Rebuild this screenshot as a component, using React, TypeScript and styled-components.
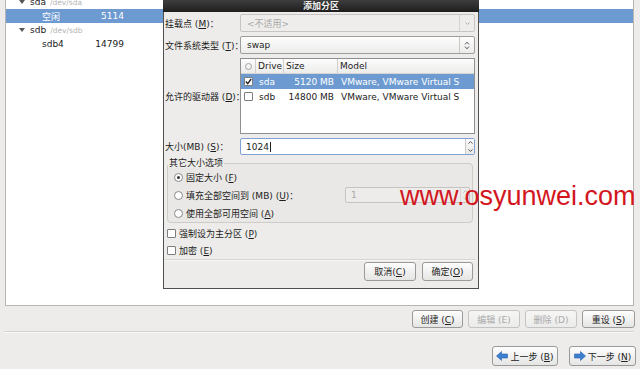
import React from 'react'
import styled, { createGlobalStyle } from 'styled-components'

const GlobalStyle = createGlobalStyle`
  html, body { margin: 0; padding: 0; }
  body {
    background: #edecea;
    font-family: 'DejaVu Sans', 'Noto Sans CJK SC', sans-serif;
    font-size: 9px;
    color: #1c1c1c;
  }
  * { box-sizing: border-box; }
`

const Screen = styled.div`
  position: relative;
  width: 640px;
  height: 369px;
  overflow: hidden;
  display: flex;
  flex-direction: column;
`

/* ---- partition tree behind the dialog ---- */

const TreePanel = styled.div`
  height: 306px;
  margin: 0 6px 0 5px;
  background: #fff;
  border: 1px solid #b6b5b1;
  border-top: none;
  overflow: hidden;
`

const TreeBody = styled.div`
  margin-top: -5px;
`

const TreeRow = styled.div<{ $selected?: boolean; $indent: number }>`
  height: 14px;
  display: flex;
  align-items: center;
  padding-left: ${p => p.$indent}px;
  background: ${p => (p.$selected ? '#6d9bd1' : 'transparent')};
  color: ${p => (p.$selected ? '#fff' : '#222')};
`

const Expander = styled.span`
  width: 0;
  height: 0;
  border-left: 3.5px solid transparent;
  border-right: 3.5px solid transparent;
  border-top: 4px solid #555;
  margin-right: 5px;
`

const DevPath = styled.span`
  color: #b4b4b4;
  font-size: 7.5px;
  margin-left: 4px;
`

const TreeName = styled.span`
  width: 52px;
`

const TreeSize = styled.span`
  width: 30px;
  text-align: right;
`

/* ---- main window buttons ---- */

const ActionBar = styled.div`
  display: flex;
  justify-content: flex-end;
  gap: 5px;
  margin-top: 4px;
  padding-right: 5px;
`

const Button = styled.button<{ $w: number; $h?: number }>`
  width: ${p => p.$w}px;
  height: ${p => p.$h ?? 18}px;
  padding: 0;
  display: flex;
  align-items: center;
  justify-content: center;
  gap: 2px;
  font-family: inherit;
  font-size: 9px;
  color: #222;
  border: 1px solid #9a9a9a;
  border-radius: 3px;
  background: linear-gradient(#fefefe, #e5e5e4);
  &:disabled {
    color: #a9a9a9;
    border-color: #c4c4c4;
    background: linear-gradient(#f6f6f5, #ebebea);
  }
`

const Separator = styled.div`
  margin-top: 3px;
  height: 2px;
  margin-left: 5px;
  margin-right: 6px;
  border-top: 1px solid #d3d2cf;
  border-bottom: 1px solid #f8f8f7;
`

const NavBar = styled.div`
  display: flex;
  justify-content: flex-end;
  gap: 11px;
  margin-top: 13px;
  padding-right: 4px;
`

/* ---- dialog ---- */

const Dialog = styled.div`
  position: absolute;
  left: 163px;
  top: 0;
  width: 316px;
  height: 289px;
  background: #edecea;
  border: 1px solid #4f4f4f;
  border-top: none;
  display: flex;
  flex-direction: column;
`

const TitleBar = styled.div`
  height: 12px;
  margin: 0 -1px;
  background: linear-gradient(#3e3e3e, #1e1e1e);
  color: #f2f2f2;
  font-weight: bold;
  font-size: 9px;
  line-height: 12px;
  text-align: center;
`

const DialogBody = styled.div`
  flex: 1;
  display: flex;
  flex-direction: column;
  padding: 2px 3px 0 1px;
`

const FormGrid = styled.div`
  display: grid;
  grid-template-columns: 75px 1fr;
  grid-template-rows: 18px 18px 76px 17px;
  row-gap: 4px;
  align-items: center;
`

const Label = styled.span`
  white-space: nowrap;
`

const Combo = styled.div<{ $disabled?: boolean }>`
  height: 18px;
  display: flex;
  align-items: center;
  padding-left: 6px;
  border: 1px solid ${p => (p.$disabled ? '#c6c5c3' : '#9f9e9c')};
  border-radius: 2px;
  color: ${p => (p.$disabled ? '#a8a8a8' : '#1c1c1c')};
  background: ${p => (p.$disabled ? '#eeedeb' : 'linear-gradient(#fdfdfd, #ececeb)')};
`

const ComboText = styled.span`
  flex: 1;
`

const ComboArrow = styled.span<{ $disabled?: boolean }>`
  width: 15px;
  height: 100%;
  display: flex;
  align-items: center;
  justify-content: center;
  border-left: 1px solid ${p => (p.$disabled ? '#d4d3d1' : '#c9c8c6')};
`

const DriveList = styled.div`
  height: 76px;
  background: #fff;
  border: 1px solid #8f8f8f;
`

const DriveGrid = styled.div<{ $header?: boolean; $selected?: boolean }>`
  display: grid;
  grid-template-columns: 15px 28px 54px 1fr;
  height: 15px;
  align-items: center;
  background: ${p => (p.$header ? 'linear-gradient(#fcfcfc, #ececeb)' : p.$selected ? '#6d9bd1' : '#fff')};
  color: ${p => (p.$selected ? '#fff' : '#1c1c1c')};
  border-bottom: ${p => (p.$header ? '1px solid #d6d5d3' : 'none')};
`

const HeadCell = styled.span<{ $last?: boolean }>`
  height: 100%;
  display: flex;
  align-items: center;
  padding-left: 2px;
  border-right: ${p => (p.$last ? 'none' : '1px solid #d0cfcd')};
`

const Cell = styled.span<{ $right?: boolean }>`
  padding: ${p => (p.$right ? '0 4px 0 0' : '0 0 0 3px')};
  text-align: ${p => (p.$right ? 'right' : 'left')};
  white-space: nowrap;
  overflow: hidden;
`

const CheckCell = styled.span`
  display: flex;
  justify-content: center;
`

const Box = styled.span`
  width: 9px;
  height: 9px;
  flex: none;
  display: inline-flex;
  align-items: center;
  justify-content: center;
  border: 1px solid #7d7d7d;
  border-radius: 1px;
  background: #fff;
`

const HeadCircle = styled.span`
  width: 7px;
  height: 7px;
  border: 1px solid #a2a2a2;
  border-radius: 50%;
  margin-left: 2px;
`

const SpinField = styled.div<{ $disabled?: boolean; $focus?: boolean }>`
  height: 100%;
  display: flex;
  align-items: center;
  padding-left: 5px;
  border: 1px solid ${p => (p.$focus ? '#7fa2d4' : p.$disabled ? '#c5c4c2' : '#9f9e9c')};
  border-radius: 2px;
  background: ${p => (p.$disabled ? '#edecea' : '#fff')};
  color: ${p => (p.$disabled ? '#a8a8a8' : '#1c1c1c')};
`

const SpinValue = styled.span`
  flex: 1;
  display: flex;
  align-items: center;
`

const Caret = styled.span`
  width: 1px;
  height: 10px;
  background: #222;
  margin-left: 1px;
`

const SpinButtons = styled.span<{ $disabled?: boolean }>`
  width: 9px;
  height: 100%;
  display: flex;
  flex-direction: column;
  border-left: 1px solid ${p => (p.$disabled ? '#d4d3d1' : '#c9c8c6')};
  background: ${p => (p.$disabled ? 'transparent' : 'linear-gradient(#fbfbfb, #e8e8e7)')};
`

const SpinHalf = styled.span`
  flex: 1;
  display: flex;
  align-items: center;
  justify-content: center;
`

const Frame = styled.fieldset`
  margin: 3px 2px 2px 2px;
  padding: 0;
  border: 1px solid #cdccc9;
  border-radius: 4px;
  background: #e9e8e6;
`

const Legend = styled.legend`
  padding: 0 1px;
  margin-left: 0;
  font-size: 9px;
  line-height: 10px;
  background: #edecea;
`

const RadioRow = styled.div`
  height: 18px;
  display: flex;
  align-items: center;
  padding-left: 6px;
  gap: 3px;
`

const Radio = styled.span<{ $on?: boolean }>`
  width: 9px;
  height: 9px;
  flex: none;
  border: 1px solid #888;
  border-radius: 50%;
  background: #fff;
  display: flex;
  align-items: center;
  justify-content: center;
  &::after {
    content: '';
    width: 3px;
    height: 3px;
    border-radius: 50%;
    background: ${p => (p.$on ? '#333' : 'transparent')};
  }
`

const RadioText = styled.span`
  flex: 1;
`

const FillSpin = styled.div`
  width: 125px;
  height: 16px;
  margin-right: 2px;
`

const CheckRow = styled.div`
  height: 17px;
  display: flex;
  align-items: center;
  gap: 3px;
  padding-left: 2px;
`

const DialogSeparator = styled.div`
  height: 2px;
  border-top: 1px solid #d6d5d2;
  border-bottom: 1px solid #f7f7f6;
`

const DialogButtons = styled.div`
  display: flex;
  justify-content: flex-end;
  gap: 6px;
  margin-top: 1px;
  padding-right: 2px;
`

const Watermark = styled.div`
  position: absolute;
  left: 400px;
  top: 183px;
  font-family: 'Liberation Sans', Arial, sans-serif;
  font-size: 27px;
  line-height: 27px;
  color: #d3161e;
  white-space: nowrap;
`

const Check = () => (
  <svg width="7" height="7" viewBox="0 0 7 7">
    <path d="M0.8 3.6 L2.7 5.6 L6.2 1" stroke="#222" strokeWidth="1.4" fill="none" />
  </svg>
)

const Chevron = ({ up, color = '#666' }: { up?: boolean; color?: string }) => (
  <svg width="5" height="3" viewBox="0 0 5 3">
    <path d={up ? 'M0.5 2.6 L2.5 0.6 L4.5 2.6' : 'M0.5 0.4 L2.5 2.4 L4.5 0.4'} stroke={color} strokeWidth="0.9" fill="none" />
  </svg>
)

const UpDown = () => (
  <svg width="6" height="9" viewBox="0 0 6 9">
    <path d="M1 3.4 L3 1.2 L5 3.4 M1 5.6 L3 7.8 L5 5.6" stroke="#444" strokeWidth="0.9" fill="none" />
  </svg>
)

const Arrow = ({ left }: { left?: boolean }) => (
  <svg width="12" height="10" viewBox="0 0 12 10" style={left ? undefined : { transform: 'scaleX(-1)' }}>
    <path d="M0.5 5 L5.5 0.5 L5.5 3 L11.5 3 L11.5 7 L5.5 7 L5.5 9.5 Z" fill="#3d7fd1" stroke="#2a62ad" strokeWidth="0.6" />
  </svg>
)

const drives = [
  { name: 'sda', size: '5120 MB', model: 'VMware, VMware Virtual S', on: true },
  { name: 'sdb', size: '14800 MB', model: 'VMware, VMware Virtual S', on: false },
]

export default function App() {
  return (
    <>
      <GlobalStyle />
      <Screen>
        <TreePanel>
          <TreeBody>
            <TreeRow $indent={13}>
              <Expander />
              <span>sda</span>
              <DevPath>/dev/sda</DevPath>
            </TreeRow>
            <TreeRow $indent={36} $selected>
              <TreeName>空闲</TreeName>
              <TreeSize>5114</TreeSize>
            </TreeRow>
            <TreeRow $indent={13}>
              <Expander />
              <span>sdb</span>
              <DevPath>/dev/sdb</DevPath>
            </TreeRow>
            <TreeRow $indent={36}>
              <TreeName>sdb4</TreeName>
              <TreeSize>14799</TreeSize>
            </TreeRow>
          </TreeBody>
        </TreePanel>

        <ActionBar>
          <Button $w={51}><span>创建 (<u>C</u>)</span></Button>
          <Button $w={52} disabled><span>编辑 (E)</span></Button>
          <Button $w={52} disabled><span>删除 (D)</span></Button>
          <Button $w={53}><span>重设 (<u>S</u>)</span></Button>
        </ActionBar>
        <Separator />
        <NavBar>
          <Button $w={66} $h={20}><Arrow left /><span>上一步 (<u>B</u>)</span></Button>
          <Button $w={67} $h={20}><Arrow /><span>下一步 (<u>N</u>)</span></Button>
        </NavBar>

        <Dialog>
          <TitleBar>添加分区</TitleBar>
          <DialogBody>
            <FormGrid>
              <Label>挂载点 (<u>M</u>)：</Label>
              <Combo $disabled>
                <ComboText>&lt;不适用&gt;</ComboText>
                <ComboArrow $disabled><Chevron color="#aaa" /></ComboArrow>
              </Combo>

              <Label>文件系统类型 (<u>T</u>)：</Label>
              <Combo>
                <ComboText>swap</ComboText>
                <ComboArrow><UpDown /></ComboArrow>
              </Combo>

              <Label>允许的驱动器 (<u>D</u>)：</Label>
              <DriveList>
                <DriveGrid $header>
                  <HeadCell><HeadCircle /></HeadCell>
                  <HeadCell>Drive</HeadCell>
                  <HeadCell>Size</HeadCell>
                  <HeadCell $last>Model</HeadCell>
                </DriveGrid>
                {drives.map(d => (
                  <DriveGrid key={d.name} $selected={d.on}>
                    <CheckCell><Box>{d.on && <Check />}</Box></CheckCell>
                    <Cell>{d.name}</Cell>
                    <Cell $right>{d.size}</Cell>
                    <Cell>{d.model}</Cell>
                  </DriveGrid>
                ))}
              </DriveList>

              <Label>大小(MB) (<u>S</u>)：</Label>
              <SpinField $focus>
                <SpinValue>1024<Caret /></SpinValue>
                <SpinButtons>
                  <SpinHalf><Chevron up color="#444" /></SpinHalf>
                  <SpinHalf><Chevron color="#444" /></SpinHalf>
                </SpinButtons>
              </SpinField>
            </FormGrid>

            <Frame>
              <Legend>其它大小选项</Legend>
              <RadioRow>
                <Radio $on />
                <RadioText>固定大小 (<u>F</u>)</RadioText>
              </RadioRow>
              <RadioRow>
                <Radio />
                <RadioText>填充全部空间到 (MB) (<u>U</u>)：</RadioText>
                <FillSpin>
                  <SpinField $disabled>
                    <SpinValue>1</SpinValue>
                    <SpinButtons $disabled>
                      <SpinHalf><Chevron up color="#bbb" /></SpinHalf>
                      <SpinHalf><Chevron color="#bbb" /></SpinHalf>
                    </SpinButtons>
                  </SpinField>
                </FillSpin>
              </RadioRow>
              <RadioRow>
                <Radio />
                <RadioText>使用全部可用空间 (<u>A</u>)</RadioText>
              </RadioRow>
            </Frame>

            <CheckRow>
              <Box />
              <span>强制设为主分区 (<u>P</u>)</span>
            </CheckRow>
            <CheckRow>
              <Box />
              <span>加密 (<u>E</u>)</span>
            </CheckRow>
            <DialogSeparator />
            <DialogButtons>
              <Button $w={52} $h={19}><span>取消(<u>C</u>)</span></Button>
              <Button $w={51} $h={19}><span>确定(<u>O</u>)</span></Button>
            </DialogButtons>
          </DialogBody>
        </Dialog>

        <Watermark>www.osyunwei.com</Watermark>
      </Screen>
    </>
  )
}
